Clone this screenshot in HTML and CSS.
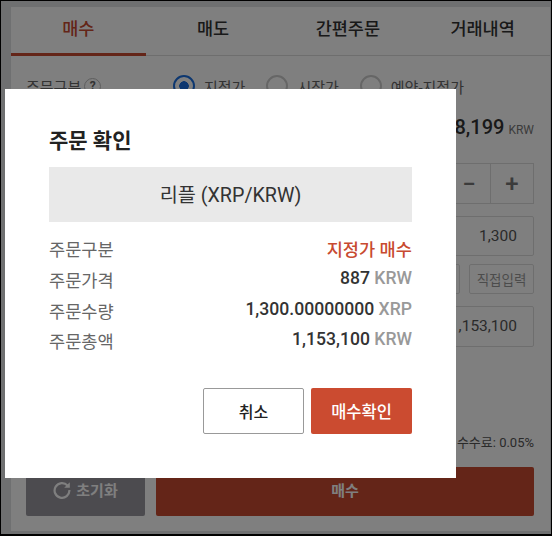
FILE: index.html
```html
<!DOCTYPE html>
<html lang="ko">
  <head>
    <meta charset="UTF-8" />
    <title>주문 확인</title>
    <link rel="stylesheet" href="styles.css">
  </head>
  <body>
    <div class="frame">
      <!-- Order form behind the dialog -->
      <main class="panel">
        <nav class="tabs">
          <a class="tab active">매수</a>
          <a class="tab">매도</a>
          <a class="tab">간편주문</a>
          <a class="tab">거래내역</a>
        </nav>

        <div class="form">
          <div class="type-row">
            <span class="type-label">주문구분 <i class="help">?</i></span>
            <label class="radio checked">지정가</label>
            <label class="radio">시장가</label>
            <label class="radio">예약-지정가</label>
          </div>

          <div class="balance"><b>8,199</b> <small>KRW</small></div>

          <div class="stepper">
            <div class="box"></div>
            <button class="step minus">−</button>
            <button class="step plus">+</button>
          </div>

          <div class="box amount">1,300</div>

          <div class="quick">
            <button class="quick-btn wide"></button>
            <button class="quick-btn">직접입력</button>
          </div>

          <div class="box amount total">1,153,100</div>

          <div class="fee">수수료: 0.05%</div>

          <div class="actions">
            <button class="reset">
              <svg viewBox="0 0 18 18" width="18" height="18">
                <path d="M14.6 4.6A7.4 7.4 0 1 0 16.4 9" fill="none" stroke="currentColor" stroke-width="2.2"/>
                <path d="M16.8 1.2v5.6h-5.6z" fill="currentColor"/>
              </svg>
              초기화
            </button>
            <button class="buy">매수</button>
          </div>
        </div>
      </main>

      <div class="overlay"></div>

      <!-- Confirm dialog -->
      <section class="modal">
        <h2 class="modal-title">주문 확인</h2>
        <div class="market">리플 (XRP/KRW)</div>
        <dl class="details">
          <div class="detail"><dt>주문구분</dt><dd class="red">지정가 매수</dd></div>
          <div class="detail"><dt>주문가격</dt><dd>887 <span>KRW</span></dd></div>
          <div class="detail"><dt>주문수량</dt><dd>1,300.00000000 <span>XRP</span></dd></div>
          <div class="detail"><dt>주문총액</dt><dd>1,153,100 <span>KRW</span></dd></div>
        </dl>
        <div class="modal-btns">
          <button class="btn cancel">취소</button>
          <button class="btn confirm">매수확인</button>
        </div>
      </section>
    </div>
  </body>
</html>
```

FILE: styles.css
```css
* {
  margin: 0;
  box-sizing: border-box;
}

html,
body {
  height: 100%;
}

body {
  font-family: Roboto, "Noto Sans CJK KR", sans-serif;
  overflow: hidden;
}

button {
  font-family: inherit;
}

.frame {
  position: relative;
  height: 536px;
  padding: 6px 1px 3px 10px;
  background: #dfe1e3;
  border: 1px solid #000;
  border-bottom-width: 2px;
  overflow: hidden;
}

/* Order form */
.panel {
  height: 100%;
  background: #fff;
}

.tabs {
  display: flex;
  height: 49px;
  border-bottom: 1px solid #ddd;
}

.tab {
  flex: 1;
  height: 49px;
  line-height: 45px;
  text-align: center;
  font-size: 17.5px;
  font-weight: 500;
  color: #333;
}

.tab.active {
  color: #c84a30;
  border-bottom: 3px solid #c84a30;
}

.form {
  display: flex;
  flex-direction: column;
  padding: 19px 16px 0 15px;
}

.type-row {
  display: flex;
  align-items: center;
  height: 22px;
  font-size: 15px;
  color: #666;
}

.type-label {
  display: flex;
  align-items: center;
  gap: 3px;
  width: 147px;
}

.help {
  width: 17px;
  height: 17px;
  border: 1px solid #bbb;
  border-radius: 50%;
  font-size: 12px;
  font-style: normal;
  font-weight: 700;
  line-height: 15px;
  text-align: center;
}

.radio {
  display: flex;
  align-items: center;
  gap: 9px;
  margin-right: 21px;
}

.radio::before {
  content: "";
  width: 18px;
  height: 18px;
  border: 2px solid #ccc;
  border-radius: 50%;
}

.radio.checked::before {
  border-color: #1a6fe0;
  background: radial-gradient(circle, #1a6fe0 0 4.5px, #fff 5px);
}

.balance {
  margin-top: 19px;
  height: 22px;
  line-height: 22px;
  text-align: right;
  color: #333;
}

.balance b {
  font-size: 20px;
  font-weight: 500;
}

.balance small {
  font-size: 12px;
  color: #777;
}

.stepper {
  display: flex;
  height: 41px;
  margin-top: 25px;
}

.box {
  flex: 1;
  border: 1px solid #ddd;
  border-radius: 2px;
}

.step {
  width: 43px;
  border: 1px solid #ddd;
  border-left: 0;
  background: #fff;
  color: #777;
  font-size: 24px;
  font-weight: 500;
  line-height: 1;
}

.amount {
  flex: none;
  height: 40px;
  margin-top: 12px;
  padding-right: 16px;
  line-height: 38px;
  text-align: right;
  font-size: 15.5px;
  color: #555;
}

.quick {
  display: flex;
  gap: 9px;
  height: 30px;
  margin-top: 8px;
}

.quick-btn {
  width: 65px;
  padding: 0;
  border: 1px solid #ddd;
  border-radius: 2px;
  background: #fff;
  font-size: 13.5px;
  color: #999;
}

.quick-btn.wide {
  flex: 1;
}

.total {
  height: 41px;
  line-height: 39px;
}

.fee {
  height: 18px;
  margin-top: 87px;
  line-height: 18px;
  text-align: right;
  font-size: 13px;
  color: #555;
}

.actions {
  display: flex;
  gap: 11px;
  height: 49px;
  margin-top: 15px;
}

.reset,
.buy {
  padding: 0 0 4px;
  border: 0;
  border-radius: 2px;
  color: #fff;
  font-size: 15px;
  font-weight: 700;
}

.reset {
  display: flex;
  align-items: center;
  justify-content: center;
  gap: 5px;
  width: 119px;
  background: #98969f;
}

.buy {
  flex: 1;
  background: #c84a30;
}

.overlay {
  position: absolute;
  top: 0;
  right: 0;
  bottom: 0;
  left: 0;
  background: rgba(0, 0, 0, 0.5);
}

/* Confirm dialog */
.modal {
  position: absolute;
  top: 88px;
  left: 4px;
  width: 451px;
  height: 389px;
  padding: 38px 44px 0;
  background: #fff;
}

.modal-title {
  height: 28px;
  line-height: 28px;
  font-size: 21px;
  font-weight: 700;
  color: #222;
}

.market {
  height: 55px;
  margin-top: 12px;
  line-height: 57px;
  text-align: center;
  font-size: 19.7px;
  color: #333;
  background: #e9e9e9;
}

.details {
  margin-top: 13px;
}

.detail {
  display: flex;
  align-items: center;
  justify-content: space-between;
  height: 30.7px;
  font-size: 17.6px;
}

.detail dt {
  margin-top: -3px;
  color: #666;
}

.detail dd {
  margin-top: -6px;
  font-weight: 500;
  color: #333;
}

.detail dd span {
  color: #999;
}

.detail dd.red {
  margin-top: -3px;
  color: #c84a30;
}

.modal-btns {
  display: flex;
  justify-content: flex-end;
  gap: 7px;
  margin-top: 30px;
}

.btn {
  width: 101px;
  height: 46px;
  padding: 0;
  border-radius: 2px;
  font-size: 16px;
  font-weight: 500;
}

.cancel {
  border: 1px solid #999;
  background: #fff;
  color: #222;
}

.confirm {
  border: 0;
  background: #cb4b30;
  color: #fff;
  font-size: 16.5px;
}
```
